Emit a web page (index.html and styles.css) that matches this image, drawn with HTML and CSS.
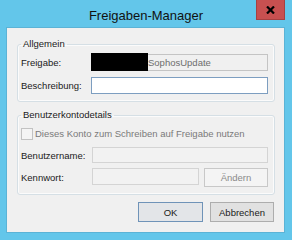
FILE: index.html
```html
<!DOCTYPE html>
<html lang="de">
<head>
<meta charset="utf-8">
<title>Freigaben-Manager</title>
<link rel="stylesheet" href="styles.css">
</head>
<body>
<div class="window">
  <div class="titlebar">
    <span class="title">Freigaben-Manager</span>
    <div class="close">
      <svg width="9" height="8" viewBox="0 0 9 8"><path d="M1 0.5 L8 7.5 M8 0.5 L1 7.5" stroke="#000" stroke-width="2.2" fill="none"/></svg>
    </div>
  </div>
  <div class="client">
    <fieldset class="group g1">
      <legend>Allgemein</legend>
      <div class="row">
        <span class="label">Freigabe:</span>
        <div class="field readonly"><span class="redact"></span><span class="val">SophosUpdate</span></div>
      </div>
      <div class="row">
        <span class="label">Beschreibung:</span>
        <div class="field active"></div>
      </div>
    </fieldset>
    <fieldset class="group g2">
      <legend>Benutzerkontodetails</legend>
      <div class="check"><span class="box"></span><span class="dim">Dieses Konto zum Schreiben auf Freigabe nutzen</span></div>
      <div class="row r-user">
        <span class="label">Benutzername:</span>
        <div class="field disabled"></div>
      </div>
      <div class="row r-pass">
        <span class="label">Kennwort:</span>
        <div class="field disabled short"></div>
        <div class="btn off">Ändern</div>
      </div>
    </fieldset>
    <div class="buttons">
      <div class="btn default">OK</div>
      <div class="btn">Abbrechen</div>
    </div>
  </div>
</div>
</body>
</html>
```

FILE: styles.css
```css
html, body {
  margin: 0;
  padding: 0;
}
body {
  width: 292px;
  height: 240px;
  overflow: hidden;
  background: #63c6ea;
  font-family: "Liberation Sans", Arial, sans-serif;
  font-size: 9.5px;
  color: #1a1a1a;
}
.window {
  height: 240px;
  display: flex;
  flex-direction: column;
}
.titlebar {
  height: 28px;
  flex: none;
  display: grid;
  grid-template-columns: 1fr auto 1fr;
  align-items: start;
}
.title {
  grid-column: 2;
  font-size: 13px;
  line-height: 13px;
  margin-top: 9px;
  color: #111;
}
.close {
  grid-column: 3;
  justify-self: end;
  margin-right: 7px;
  width: 29px;
  height: 20px;
  box-sizing: border-box;
  background: #c75050;
  border: 1px solid #a64141;
  border-top: 0;
  display: flex;
  align-items: center;
  justify-content: center;
}
.client {
  flex: none;
  height: 204px;
  margin: 0 8px 0 7px;
  box-sizing: border-box;
  padding: 10px 9px 0 10px;
  background: #f0f0f0;
  box-shadow: 0 0 0 1px #5bb3d6;
}
.group {
  margin: 0;
  min-width: 0;
  box-sizing: border-box;
  width: 258px;
  border: 1px solid #d5dfe5;
  border-radius: 3px;
  box-shadow: inset 0 0 0 1px #fbfbfb;
  padding: 4px 6px 7px 3px;
  display: flex;
  flex-direction: column;
  gap: 6px;
}
.group legend {
  padding: 0 2px;
  line-height: 12px;
  color: #1a1a1a;
}
.g2 {
  margin-top: 7px;
  padding-top: 6px;
  gap: 0;
}
.row {
  display: flex;
  align-items: center;
  height: 17px;
}
.label {
  width: 70px;
  flex: none;
}
.g2 .label {
  width: 71px;
}
.field {
  position: relative;
  box-sizing: border-box;
  flex: none;
  width: 177px;
  height: 17px;
  border: 1px solid #c9c9c9;
  background: #f0f0f0;
  display: flex;
  align-items: center;
}
.field.active {
  background: #fff;
  border-color: #7d9ec0;
}
.field.readonly {
  border-color: #c4c4c4;
}
.val {
  color: #6d6d6d;
  padding-left: 56px;
}
.redact {
  position: absolute;
  left: -1px;
  top: -2px;
  width: 57px;
  height: 18px;
  background: #000;
}
.field.disabled {
  width: 176px;
  border-color: #d4d4d4;
  background: #f2f2f2;
}
.check {
  display: flex;
  align-items: center;
  height: 13px;
  gap: 2px;
  margin-bottom: 7px;
}
.box {
  width: 12px;
  height: 12px;
  box-sizing: border-box;
  border: 1px solid #c2c2c2;
  background: #f4f4f4;
}
.dim {
  color: #7a7a7a;
}
.r-user {
  height: 16px;
  margin-bottom: 5px;
}
.r-user .field {
  height: 16px;
}
.r-pass {
  height: 19px;
  align-items: flex-start;
}
.r-pass .label {
  align-self: center;
}
.field.short {
  width: 107px;
  margin-right: 5px;
}
.btn {
  box-sizing: border-box;
  width: 64px;
  height: 20px;
  border: 1px solid #adadad;
  background: #e1e1e1;
  display: flex;
  align-items: center;
  justify-content: center;
  color: #1a1a1a;
}
.btn.off {
  height: 19px;
  border-color: #c8c8c8;
  background: #f4f4f4;
  color: #8a8a8a;
}
.btn.default {
  width: 65px;
  border-color: #6f93b8;
  background: #e3e5e8;
}
.buttons {
  display: flex;
  justify-content: flex-end;
  gap: 7px;
  margin-top: 7px;
  margin-right: 1px;
}
```
